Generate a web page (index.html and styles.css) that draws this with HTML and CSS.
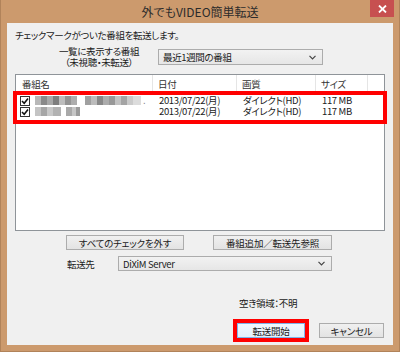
FILE: index.html
```html
<!DOCTYPE html>
<html lang="ja">
<head>
    <meta charset="UTF-8">
    <title>外でもVIDEO簡単転送</title>
    <link rel="stylesheet" href="styles.css">
</head>
<body>
    <div class="window">
        <!-- Title bar -->
        <div class="titlebar">
            <span class="title">外でもVIDEO簡単転送</span>
            <button class="close-btn" aria-label="閉じる">
                <svg width="9" height="8" viewBox="0 0 9 8"><path d="M1 0.5 L8 7.5 M8 0.5 L1 7.5" stroke="#fff" stroke-width="1.8"/></svg>
            </button>
        </div>

        <div class="client">
            <p class="intro">チェックマークがついた番組を転送します。</p>

            <!-- Filter -->
            <div class="filter-row">
                <div class="filter-label">
                    <span class="line">一覧に表示する番組</span>
                    <span class="line">（未視聴・未転送）</span>
                </div>
                <div class="combo filter-combo">
                    <span>最近1週間の番組</span>
                    <svg class="chev" width="7" height="5" viewBox="0 0 7 5"><path d="M0.5 0.8 L3.5 3.8 L6.5 0.8" fill="none" stroke="#444" stroke-width="1.2"/></svg>
                </div>
            </div>

            <!-- Program list -->
            <div class="list-wrap">
                <div class="list">
                    <div class="list-head">
                        <div class="col">番組名</div>
                        <div class="col">日付</div>
                        <div class="col">画質</div>
                        <div class="col">サイズ</div>
                        <div class="col last"></div>
                    </div>
                    <div class="list-row">
                        <div class="cell name">
                            <svg class="check" width="10" height="10" viewBox="0 0 10 10"><rect x="0.5" y="0.5" width="9" height="9" fill="#fff" stroke="#333"/><path d="M2 5 L4.2 7.2 L8 2.6" fill="none" stroke="#111" stroke-width="1.6"/></svg>
                            <span class="blur blur-a"></span>
                            <span class="blur blur-b"></span>
                            <span class="blur-dot">.</span>
                        </div>
                        <div class="cell">2013/07/22(月)</div>
                        <div class="cell">ダイレクト(HD)</div>
                        <div class="cell">117 MB</div>
                    </div>
                    <div class="list-row">
                        <div class="cell name">
                            <svg class="check" width="10" height="10" viewBox="0 0 10 10"><rect x="0.5" y="0.5" width="9" height="9" fill="#fff" stroke="#333"/><path d="M2 5 L4.2 7.2 L8 2.6" fill="none" stroke="#111" stroke-width="1.6"/></svg>
                            <span class="blur blur-c"></span>
                            <span class="blur blur-d"></span>
                        </div>
                        <div class="cell">2013/07/22(月)</div>
                        <div class="cell">ダイレクト(HD)</div>
                        <div class="cell">117 MB</div>
                    </div>
                </div>
                <!-- annotation around checked rows -->
                <div class="mark-rows"></div>
            </div>

            <div class="btn-row">
                <button class="btn btn-clear">すべてのチェックを外す</button>
                <button class="btn btn-add">番組追加／転送先参照</button>
            </div>

            <!-- Destination -->
            <div class="dest-row">
                <span class="dest-label">転送先</span>
                <div class="combo dest-combo">
                    <span>DiXiM Server</span>
                    <svg class="chev" width="7" height="5" viewBox="0 0 7 5"><path d="M0.5 0.8 L3.5 3.8 L6.5 0.8" fill="none" stroke="#444" stroke-width="1.2"/></svg>
                </div>
            </div>

            <p class="free">空き領域：不明</p>

            <div class="action-row">
                <button class="btn btn-start">転送開始</button>
                <button class="btn btn-cancel">キャンセル</button>
            </div>
        </div>
    </div>
</body>
</html>
```

FILE: styles.css
```css
/* General */
body {
    margin: 0;
    font-family: "Noto Sans CJK JP", "Noto Sans", sans-serif;
    font-feature-settings: "palt";
    font-size: 9.5px;
    letter-spacing: -0.35px;
    color: #1a1a1a;
}

p {
    margin: 0;
}

/* Window frame */
.window {
    width: 400px;
    height: 352px;
    box-sizing: border-box;
    background-color: #cc9a6d;
    border: 1px solid #b1835a;
    border-top: 0;
    padding: 0 6px 6px;
    display: flex;
    flex-direction: column;
}

.titlebar {
    height: 23px;
    display: grid;
    grid-template-columns: 1fr auto 1fr;
    align-items: start;
}

.title {
    grid-column: 2;
    line-height: 23px;
    font-size: 12px;
    letter-spacing: 0;
    color: #2b2b2b;
}

.close-btn {
    grid-column: 3;
    justify-self: end;
    width: 24px;
    height: 17px;
    margin-right: -1px;
    border: 0;
    padding: 0;
    background-color: #c75050;
    display: flex;
    align-items: center;
    justify-content: center;
}

/* Client area */
.client {
    flex: 1;
    background-color: #f0f0f0;
    padding: 0 8px;
    display: flex;
    flex-direction: column;
}

.intro {
    padding-top: 5px;
    line-height: 14px;
}

.filter-row {
    margin-top: 4px;
    height: 22px;
    display: flex;
    align-items: center;
    gap: 15px;
    padding-left: 40px;
}

.filter-label {
    flex: none;
    width: 88px;
    text-align: center;
    display: flex;
    flex-direction: column;
}

.filter-label .line {
    height: 11px;
    line-height: 11px;
}

/* Combo boxes */
.combo {
    flex: none;
    height: 16px;
    box-sizing: border-box;
    border: 1px solid #acacac;
    background: linear-gradient(#f2f2f2, #e6e6e6);
    display: flex;
    align-items: center;
    justify-content: space-between;
    padding: 0 6px 0 4px;
}

.filter-combo {
    width: 165px;
}

.dest-combo {
    width: 214px;
    height: 15px;
}

/* List */
.list-wrap {
    position: relative;
    margin-top: 6px;
}

.list {
    height: 157px;
    box-sizing: border-box;
    border: 1px solid #8f9499;
    background-color: #fff;
}

.list-head,
.list-row {
    display: grid;
    grid-template-columns: 137px 84px 79px 52px 1fr;
}

.list-head {
    height: 18px;
    line-height: 18px;
    color: #333;
}

.list-head .col {
    padding-left: 5px;
    border-right: 1px solid #e5e5e5;
}

.list-head .col:first-child {
    padding-left: 6px;
}

.list-head .col.last {
    border-right: 0;
}

.list-head + .list-row {
    margin-top: 2px;
}

.list-row {
    height: 11px;
    line-height: 11px;
}

.list-row .cell {
    padding-left: 6px;
    white-space: nowrap;
}

.list-row .name {
    padding-left: 4px;
    display: flex;
    align-items: center;
    gap: 5px;
}

.check {
    flex: none;
}

/* Obscured programme titles */
.blur {
    height: 9px;
    filter: blur(0.7px);
}

.blur-a {
    width: 42px;
    background: linear-gradient(90deg, #b8b8b8 0 6px, #8a8a8a 6px 12px, #a8a8a8 12px 18px, #7e7e7e 18px 24px, #bdbdbd 24px 30px, #949494 30px 36px, #adadad 36px);
}

.blur-b {
    width: 56px;
    margin-left: 3px;
    background: linear-gradient(90deg, #a0a0a0 0 6px, #bcbcbc 6px 12px, #888 12px 18px, #acacac 18px 24px, #989898 24px 30px, #c2c2c2 30px 36px, #a4a4a4 36px 42px, #cacaca 42px 48px, #dcdcdc 48px);
}

.blur-c {
    width: 26px;
    background: linear-gradient(90deg, #c4c4c4 0 6px, #a6a6a6 6px 12px, #c8c8c8 12px 18px, #b2b2b2 18px);
}

.blur-d {
    width: 14px;
    background: linear-gradient(90deg, #a9a9a9 0 6px, #c6c6c6 6px 10px, #9a9a9a 10px);
}

.blur-dot {
    margin-left: -3px;
    color: #777;
}

/* Red annotation frames */
.mark-rows {
    position: absolute;
    left: -2px;
    right: -2px;
    top: 17px;
    height: 33px;
    border: 4px solid #f00;
    box-sizing: border-box;
}

/* Buttons */
.btn {
    height: 15px;
    box-sizing: border-box;
    padding: 0;
    border: 1px solid #acacac;
    background: linear-gradient(#f0f0f0, #e3e3e3);
    font-family: inherit;
    font-feature-settings: "palt";
    font-size: 9.5px;
    letter-spacing: -0.2px;
    line-height: 12px;
    color: #1a1a1a;
}

.btn-row {
    margin-top: 4px;
    padding-left: 51px;
    display: flex;
    gap: 29px;
}

.btn-clear {
    width: 118px;
}

.btn-add {
    width: 119px;
}

.dest-row {
    margin-top: 6px;
    padding-left: 52px;
    display: flex;
    align-items: center;
}

.dest-label {
    width: 51px;
}

.free {
    margin-top: 25px;
    padding-left: 224px;
    line-height: 14px;
}

.action-row {
    margin-top: 13px;
    padding-left: 222px;
    display: flex;
    gap: 14px;
}

.btn-start {
    width: 68px;
    border-color: #7eb4ea;
    background: linear-gradient(#f2f8fd, #e3f0fb);
    outline: 4px solid #f00;
    outline-offset: 0;
}

.btn-cancel {
    width: 65px;
}
```
